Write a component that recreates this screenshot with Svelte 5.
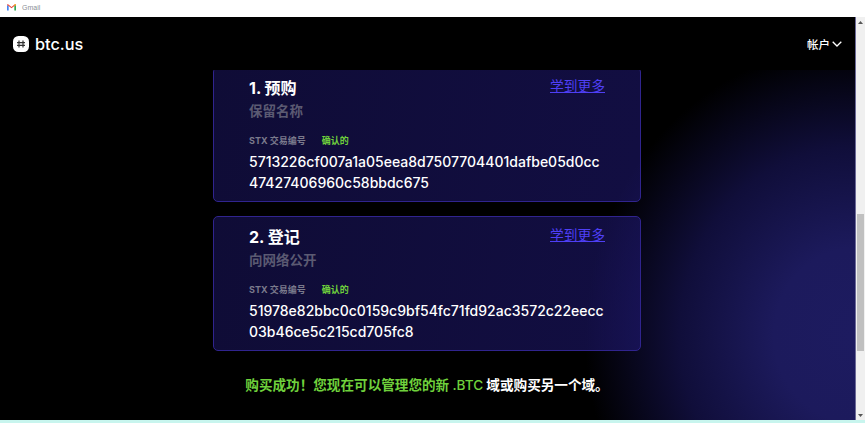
<script>
	const steps = [
		{
			title: '1. 预购',
			sub: '保留名称',
			tx: '5713226cf007a1a05eea8d7507704401dafbe05d0cc47427406960c58bbdc675'
		},
		{
			title: '2. 登记',
			sub: '向网络公开',
			tx: '51978e82bbc0c0159c9bf54fc71fd92ac3572c22eecc03b46ce5c215cd705fc8'
		}
	];
</script>

<div class="window">
	<div class="bookmarks">
		<svg class="gmail" viewBox="0 0 16 12" width="9" height="7">
			<path d="M0 11.500V1.500L3 3.500V11.500Z" fill="#4285f4" />
			<path d="M13 11.500V3.500L16 1.500V11.500Z" fill="#34a853" />
			<path d="M0 1.500C0 0 1.500 0 2.500 .8L8 5 13.500 .8C14.500 0 16 0 16 1.500L13 3.500 8 7.500 3 3.500Z" fill="#ea4335" />
			<path d="M13 3.500 16 1.500C16 .3 14.500 0 13.500 .8L13 1.200Z" fill="#fbbc04" />
		</svg>
		<span>Gmail</span>
	</div>

	<div class="viewport">
		<div class="page">
			<header>
				<a class="brand" href="#top">
					<svg viewBox="0 0 16 16" width="16" height="16">
						<rect width="16" height="16" rx="5.500" fill="#fff" />
						<path d="M6 4.500V11.500M10 4.500V11.500M4 6.700H12M4 9.300H12" stroke="#333" stroke-width="1.200" fill="none" />
					</svg>
					<span>btc.us</span>
				</a>
				<button class="account">
					<span>帐户</span>
					<svg viewBox="0 0 10 6" width="10" height="6">
						<path d="M.7 .8 5 5 9.300 .8" fill="none" stroke="#fff" stroke-width="1.300" />
					</svg>
				</button>
			</header>

			<main>
				{#each steps as s}
					<section class="card">
						<div class="top">
							<div>
								<h2>{s.title}</h2>
								<p class="sub">{s.sub}</p>
							</div>
							<a class="more" href="#top">学到更多</a>
						</div>
						<div class="meta">
							<span class="label">STX 交易编号</span>
							<span class="ok">确认的</span>
						</div>
						<p class="tx">{s.tx}</p>
					</section>
				{/each}
				<p class="done">
					<span class="green">购买成功！您现在可以管理您的新 <span class="tld">.BTC</span></span> 域或购买另一个域。
				</p>
			</main>
		</div>

		<div class="scrollbar">
			<svg viewBox="0 0 5 3" width="5" height="3"><path d="M2.500 0 5 3H0Z" fill="#555" /></svg>
			<div class="track"><div class="thumb"></div></div>
			<svg viewBox="0 0 5 3" width="5" height="3"><path d="M0 0H5L2.500 3Z" fill="#555" /></svg>
		</div>
	</div>

	<div class="strip"></div>
</div>

<style>
	:global(body) {
		margin: 0;
		background: #fff;
	}

	.window {
		display: flex;
		flex-direction: column;
		height: 423px;
		overflow: hidden;
		font-family: Inter, "Noto Sans CJK SC", sans-serif;
	}

	.bookmarks {
		display: flex;
		align-items: center;
		gap: 6px;
		flex: none;
		height: 17px;
		padding: 0 0 3px 7px;
		box-sizing: border-box;
		background: #fff;
		font-family: "Liberation Sans", sans-serif;
		font-size: 7px;
		color: #8a8f96;
	}

	.viewport {
		flex: 1;
		display: flex;
		min-height: 0;
	}

	.page {
		flex: 1;
		min-width: 0;
		overflow: hidden;
		display: flex;
		flex-direction: column;
		background:
			radial-gradient(ellipse 270px 290px at 100% 79%, #1d1b60 0%, #1c1a5c 30%, #100e3a 65%, transparent 100%),
			#000;
		border-right: 1px solid #6c6a98;
	}

	header {
		position: relative;
		z-index: 1;
		flex: none;
		height: 53px;
		background: #000;
		display: flex;
		justify-content: space-between;
		align-items: center;
		padding: 0 13px 0 13px;
	}

	.brand {
		display: flex;
		align-items: center;
		gap: 6px;
		color: #fff;
		font-size: 16.300px;
		font-weight: 500;
		text-decoration: none;
	}

	.account {
		display: flex;
		align-items: center;
		gap: 2px;
		padding: 0;
		border: 0;
		background: none;
		color: #fff;
		font: inherit;
		font-size: 11.500px;
		font-weight: 500;
	}

	main {
		width: 428px;
		margin: -3px 0 0 213px;
		display: flex;
		flex-direction: column;
		gap: 14px;
	}

	.card {
		height: 135px;
		box-sizing: border-box;
		padding: 9px 35px 0;
		border: 1px solid #30248e;
		border-radius: 5px;
		background: linear-gradient(100deg, rgba(30, 24, 108, 0.5), rgba(36, 28, 132, 0.5));
		color: #fff;
	}

	.top {
		display: flex;
		justify-content: space-between;
		align-items: flex-start;
	}

	h2 {
		margin: 0;
		font-size: 16px;
		line-height: 22px;
		font-weight: 700;
	}

	.sub {
		margin: 2px 0 0;
		font-size: 13.500px;
		line-height: 21px;
		font-weight: 700;
		color: #5b5a72;
	}

	.more {
		font-size: 13.750px;
		line-height: 18px;
		color: #4f3ff5;
	}

	.meta {
		display: flex;
		gap: 16px;
		margin-top: 12px;
		font-size: 9px;
		line-height: 14px;
		font-weight: 700;
	}

	.label {
		color: #7b7a8c;
	}

	.ok {
		color: #6fd13c;
	}

	.tx {
		width: 356px;
		margin: 3px 0 0;
		font-size: 14px;
		line-height: 21px;
		font-weight: 500;
		word-break: break-all;
	}

	.done {
		margin: 10px 0 0;
		text-align: center;
		white-space: nowrap;
		font-size: 13.600px;
		line-height: 20px;
		font-weight: 700;
		color: #fff;
	}

	.green {
		color: #6fd13c;
	}

	.tld {
		font-weight: 500;
	}

	.scrollbar {
		flex: none;
		width: 9px;
		background: #f0f0f0;
		display: flex;
		flex-direction: column;
		align-items: center;
		justify-content: space-between;
		padding: 4px 0 3px;
		box-sizing: border-box;
	}

	.track {
		flex: 1;
		width: 100%;
		padding: 190px 1px 0;
		box-sizing: border-box;
	}

	.thumb {
		height: 137px;
		background: #c0c0c0;
	}

	.strip {
		flex: none;
		height: 3px;
		background: #c8f5ee;
	}
</style>
